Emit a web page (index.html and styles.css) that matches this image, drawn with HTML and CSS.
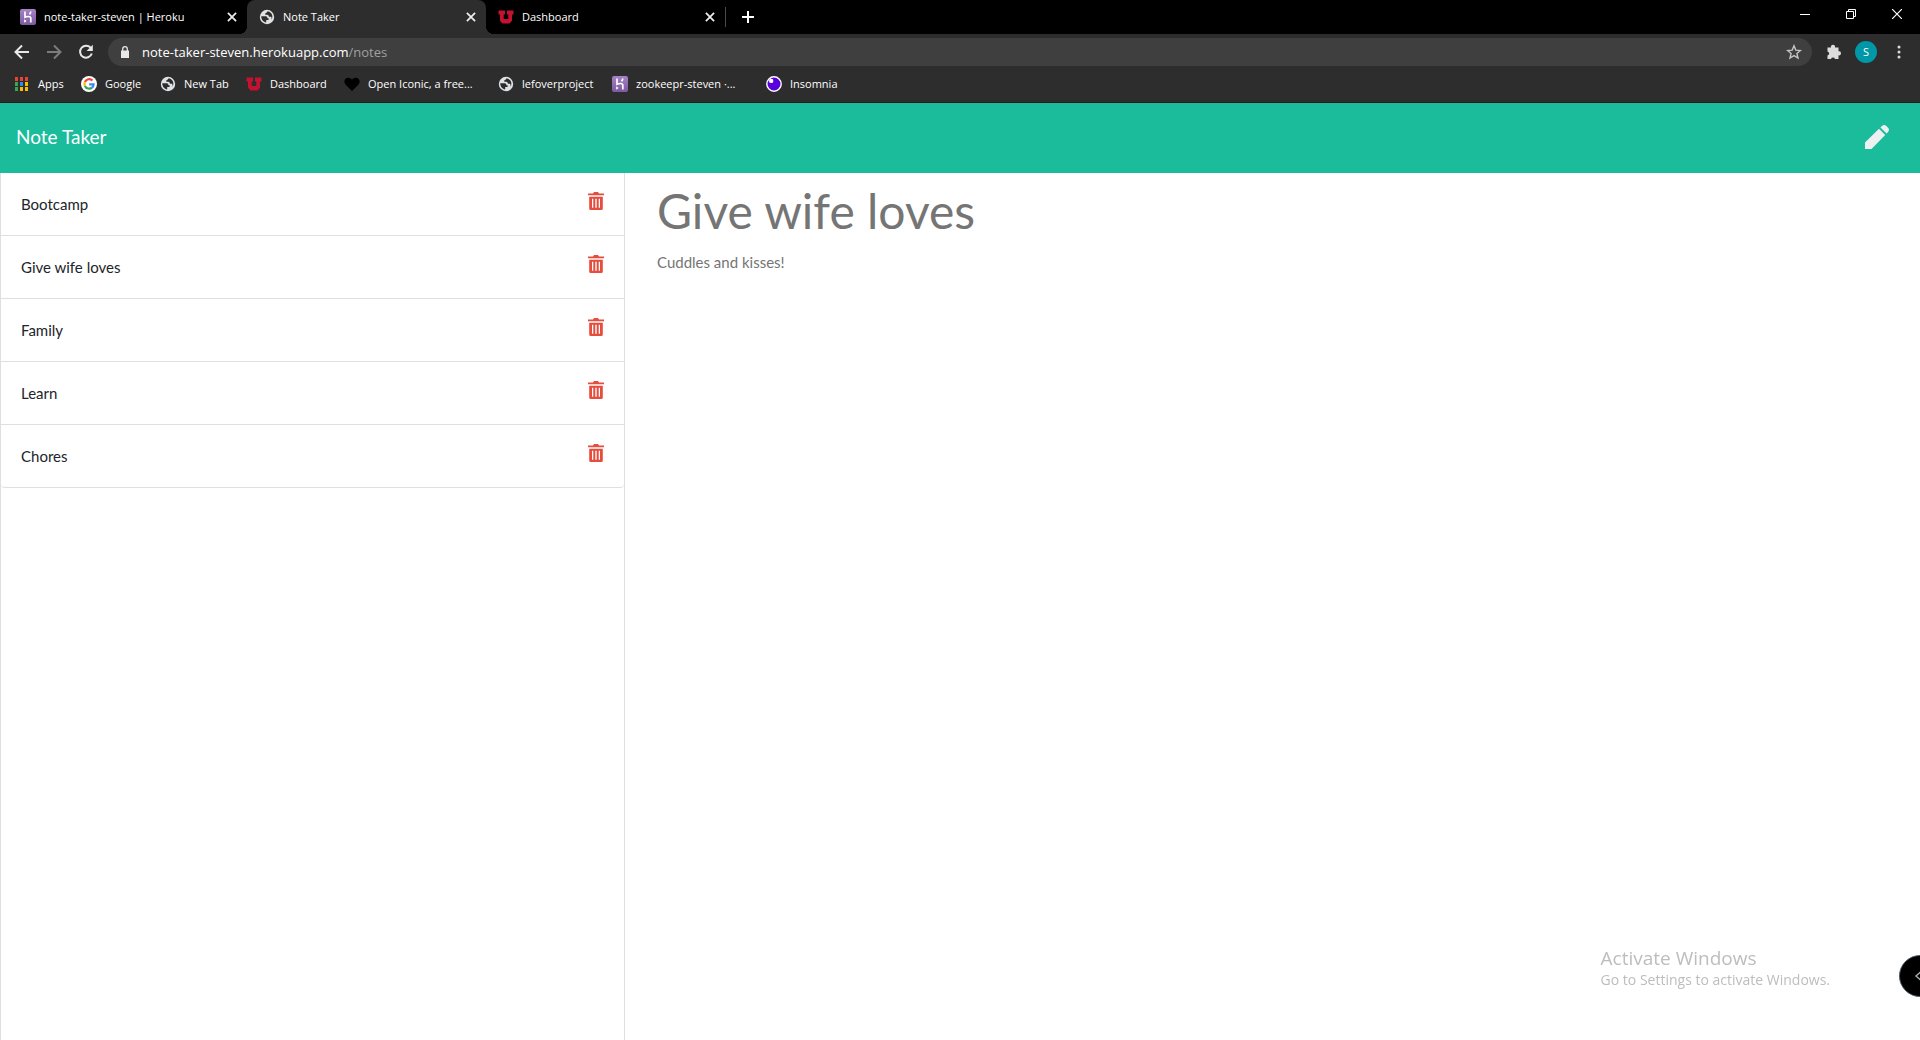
FILE: index.html
```html
<!DOCTYPE html>
<html lang="en">
<head>
<meta charset="utf-8">
<title>Note Taker</title>
<link rel="stylesheet" href="styles.css">
</head>
<body>
<svg class="sprite" aria-hidden="true">
  <defs>
    <linearGradient id="heroku-fill" x1="0" y1="0" x2="0" y2="1"><stop offset="0" stop-color="#a583c4"/><stop offset="1" stop-color="#7e5aa0"/></linearGradient>
  </defs>
  <symbol id="heroku" viewBox="0 0 16 16">
    <rect width="16" height="16" rx="2" fill="url(#heroku-fill)"/>
    <path d="M5 2.5V8.2C7 7.4 10.8 6.8 10.8 9.2V13.5M10.8 2.5C10.7 3.8 10.2 4.6 9.5 5.4" fill="none" stroke="#fff" stroke-width="1.7"/>
    <path d="M4.2 10.2L6.6 12L4.2 13.8Z" fill="#fff"/>
  </symbol>
  <symbol id="globe" viewBox="0 0 16 16">
    <circle cx="8" cy="8" r="7.2" fill="#dfe1e3"/>
    <path d="M2.2 7.2H6.6C8 7.2 8.4 8 8.4 9.3H9.6V11H7.2V13.4C4.5 13.1 2.3 10.6 2.2 7.2ZM8.5 2.3C8.3 3.6 7.4 4 6.3 4.2V5.8H8.3C9.3 5.8 9.7 6.5 9.9 7.7H12.2C12.6 8.9 12.7 9.9 12.3 11C14.3 8.2 13.8 3.5 8.5 2.3Z" fill="#2d2d2d"/>
  </symbol>
  <symbol id="utah" viewBox="0 0 16 16">
    <path d="M.5 1.5H7V5.5H5.7V10H10.3V5.5H9V1.5H15.5V5.5H14V11.8L11.5 14.5H4.5L2 11.8V5.5H.5Z" fill="#c41230"/>
  </symbol>
  <symbol id="close" viewBox="0 0 12 12"><path d="M2.500 2.500L9.500 9.500M9.500 2.500L2.500 9.500" stroke="#eee" stroke-width="1.500"/></symbol>
  <symbol id="trash" viewBox="0 0 16 18">
    <path fill="#e74c3c" fill-rule="evenodd" d="M0 1.500H5L6 0H10L11 1.500H16V3.200H0ZM1.200 4.800H14.800V16.500Q14.800 18 13.300 18H2.700Q1.200 18 1.200 16.500ZM4 6.800V15.800H5.300V6.800ZM7.300 6.800V15.800H8.700V6.800ZM10.700 6.800V15.800H12V6.800Z"/>
  </symbol>
</svg>

<header class="browser">
  <div class="tab-strip">
    <div class="tab">
      <svg class="favicon"><use href="#heroku"/></svg><span class="tab-title">note-taker-steven | Heroku</span>
      <button class="tab-close" aria-label="Close tab"><svg><use href="#close"/></svg></button>
    </div>
    <div class="tab tab-active">
      <svg class="favicon"><use href="#globe"/></svg><span class="tab-title">Note Taker</span>
      <button class="tab-close" aria-label="Close tab"><svg><use href="#close"/></svg></button>
    </div>
    <div class="tab">
      <svg class="favicon"><use href="#utah"/></svg><span class="tab-title">Dashboard</span>
      <button class="tab-close" aria-label="Close tab"><svg><use href="#close"/></svg></button>
    </div>
    <button class="new-tab" aria-label="New tab"><svg viewBox="0 0 12 12"><path d="M6 0V12M0 6H12" stroke="#fff" stroke-width="2"/></svg></button>
    <div class="window-controls">
      <button aria-label="Minimize"><svg viewBox="0 0 10 10"><path d="M0 5.500H10" stroke="#fff"/></svg></button>
      <button aria-label="Restore"><svg viewBox="0 0 10 10"><path d="M.5 2.500H7.500V9.500H.5ZM2.500 2.500V.5H9.500V7.500H7.500" fill="none" stroke="#fff"/></svg></button>
      <button aria-label="Close"><svg viewBox="0 0 10 10"><path d="M0 0L10 10M10 0L0 10" stroke="#fff" stroke-width="1.200"/></svg></button>
    </div>
  </div>

  <div class="toolbar">
    <button class="nav" aria-label="Back"><svg viewBox="0 0 16 16"><path d="M15 8H2M8 1.500L1.500 8L8 14.500" fill="none" stroke="#e8e8e8" stroke-width="2"/></svg></button>
    <button class="nav" aria-label="Forward"><svg viewBox="0 0 16 16"><path d="M1 8H14M8 1.500L14.500 8L8 14.500" fill="none" stroke="#7c7c7c" stroke-width="2"/></svg></button>
    <button class="nav" aria-label="Reload"><svg viewBox="0 0 16 16"><path d="M13 4.200A6 6 0 1 0 13.800 9.500" fill="none" stroke="#e8e8e8" stroke-width="2"/><path d="M14.800 .8V7H8.600Z" fill="#e8e8e8"/></svg></button>
    <div class="address">
      <svg class="lock" viewBox="0 0 10 12"><path d="M1 4.500H9V12H1Z" fill="#e8e8e8"/><path d="M2.700 5V3A2.300 2.300 0 0 1 7.300 3V5" fill="none" stroke="#e8e8e8" stroke-width="1.300"/></svg>
      <a class="url" href="#">note-taker-steven.herokuapp.com<span class="url-path">/notes</span></a>
      <button class="star" aria-label="Bookmark this tab"><svg viewBox="0 0 16 16"><path d="M8 1.800L9.800 6.100L14.400 6.500L10.900 9.500L12 14L8 11.600L4 14L5.100 9.500L1.600 6.500L6.200 6.100Z" fill="none" stroke="#c4c4c4" stroke-width="1.400"/></svg></button>
    </div>
    <button class="extensions" aria-label="Extensions"><svg viewBox="0 0 16 16"><path d="M1.500 3.500H5A2.100 2.100 0 1 1 9 3.500H12.500V7.300A2.050 2.050 0 1 1 12.500 11.300V15H9A2.100 2.100 0 0 0 5 15H1.500V11.500A2.100 2.100 0 0 0 1.500 7.400Z" fill="#dcdcdc"/></svg></button>
    <button class="avatar" aria-label="Profile">S</button>
    <button class="menu" aria-label="Menu"><svg viewBox="0 0 4 14"><path d="M2 2h0M2 7h0M2 12h0" stroke="#dcdcdc" stroke-width="3" stroke-linecap="round"/></svg></button>
  </div>

  <nav class="bookmarks">
    <a href="#"><svg viewBox="0 0 16 16"><path d="M1 1H4V5H1ZM6 1H9V5H6ZM11 1H14V5H11Z" fill="#ea4335"/><path d="M1 6H4V10H1Z" fill="#34a853"/><path d="M6 6H9V10H6Z" fill="#2a8af0"/><path d="M11 6H14V10H11Z" fill="#fbbc05"/><path d="M1 11H4V15H1Z" fill="#34a853"/><path d="M6 11H9V15H6ZM11 11H14V15H11Z" fill="#fbbc05"/></svg>Apps</a>
    <a href="#"><svg viewBox="0 0 16 16"><circle cx="8" cy="8" r="8" fill="#fff"/><g fill="none" stroke-width="2.200"><path d="M11.500 4.600A4.600 4.600 0 0 0 3.900 6" stroke="#ea4335"/><path d="M3.900 6A4.600 4.600 0 0 0 3.900 10" stroke="#fbbc05"/><path d="M3.900 10A4.600 4.600 0 0 0 11 11.600" stroke="#34a853"/><path d="M11 11.600A4.600 4.600 0 0 0 12.600 8.300H8.200" stroke="#4285f4"/></g></svg>Google</a>
    <a href="#"><svg><use href="#globe"/></svg>New Tab</a>
    <a href="#"><svg><use href="#utah"/></svg>Dashboard</a>
    <a href="#"><svg viewBox="0 0 16 16"><path d="M8 15L1.500 8.500C-2 4 3.500-1 8 3.500C12.500-1 18 4 14.500 8.500Z" fill="#000"/></svg>Open Iconic, a free...</a>
    <a href="#"><svg><use href="#globe"/></svg>lefoverproject</a>
    <a href="#"><svg><use href="#heroku"/></svg>zookeepr-steven ·...</a>
    <a href="#"><svg viewBox="0 0 16 16"><circle cx="8" cy="8" r="7.200" fill="#5a00dd" stroke="#fff" stroke-width="1.400"/><circle cx="5.200" cy="4.900" r="2.200" fill="#fff"/></svg>Insomnia</a>
  </nav>
</header>

<div class="navbar">
  <a class="brand" href="#">Note Taker</a>
  <button class="new-note" aria-label="New note"><svg viewBox="0 0 24 24"><path d="M0 24V17.500L14 3.800L20.200 10L6.500 24ZM15.400 2.400L17 1Q19.200-1 21.300 1L23 2.700Q25 4.800 23 7L21.600 8.600Z" fill="#ecf0f1"/></svg></button>
</div>

<main class="notes">
  <aside class="sidebar">
    <ul class="note-list">
      <li><span>Bootcamp</span><button aria-label="Delete Bootcamp"><svg><use href="#trash"/></svg></button></li>
      <li><span>Give wife loves</span><button aria-label="Delete Give wife loves"><svg><use href="#trash"/></svg></button></li>
      <li><span>Family</span><button aria-label="Delete Family"><svg><use href="#trash"/></svg></button></li>
      <li><span>Learn</span><button aria-label="Delete Learn"><svg><use href="#trash"/></svg></button></li>
      <li><span>Chores</span><button aria-label="Delete Chores"><svg><use href="#trash"/></svg></button></li>
    </ul>
  </aside>
  <section class="editor">
    <input class="note-title" aria-label="Note title" value="Give wife loves" readonly>
    <textarea class="note-text" aria-label="Note text" readonly>Cuddles and kisses!</textarea>
  </section>
</main>

<div class="activation">
  <p class="activation-title">Activate Windows</p>
  <p class="activation-text">Go to Settings to activate Windows.</p>
</div>
<button class="side-handle" aria-label="Open side panel"><svg viewBox="0 0 12 16"><path d="M10 1L2 8L10 15" fill="none" stroke="#aaa" stroke-width="1.500"/></svg></button>
</body>
</html>
```
FILE: styles.css
```css
* { box-sizing: border-box; }

body {
  margin: 0;
  min-height: 100vh;
  display: flex;
  flex-direction: column;
  overflow-x: hidden;
  background: #fff;
  color: #212529;
  font-family: Lato, "Liberation Sans", sans-serif;
  font-size: 15px;
  line-height: 22px;
}

button {
  display: flex;
  align-items: center;
  justify-content: center;
  padding: 0;
  border: 0;
  background: none;
  color: inherit;
  font: inherit;
}

a { color: inherit; text-decoration: none; }
svg { display: block; flex: none; }
.sprite { position: absolute; width: 0; height: 0; }

/* Browser chrome */
.browser {
  background: #2d2d2d;
  border-bottom: 1px solid #1e1e1e;
  color: #fff;
  font-family: "Open Sans", "Noto Sans", sans-serif;
  font-size: 11px;
  line-height: 16px;
}

.tab-strip { display: flex; height: 34px; padding-left: 8px; background: #000; }

.tab {
  display: flex;
  align-items: center;
  gap: 8px;
  width: 239px;
  padding: 0 8px 0 12px;
}
.tab-active { position: relative; background: #2d2d2d; border-radius: 8px 8px 0 0; }
.tab-active::before,
.tab-active::after {
  content: "";
  position: absolute;
  bottom: 0;
  width: 8px;
  height: 8px;
}
.tab-active::before {
  right: 100%;
  background: radial-gradient(circle at 0 0, transparent 8px, #2d2d2d 8px);
}
.tab-active::after {
  left: 100%;
  background: radial-gradient(circle at 100% 0, transparent 8px, #2d2d2d 8px);
}
.favicon { width: 16px; height: 16px; }
.tab-title { flex: 1; white-space: nowrap; }
.tab-close, .tab-close svg { width: 14px; height: 14px; }
.new-tab { width: 45px; height: 20px; margin-top: 7px; border-left: 1px solid #4a4a4a; }
.new-tab svg { width: 12px; height: 12px; }

.window-controls { display: flex; margin-left: auto; }
.window-controls button { width: 46px; height: 28px; }
.window-controls svg { width: 10px; height: 10px; }

.toolbar { display: flex; align-items: center; height: 36px; padding-left: 6px; }
.nav { width: 32px; height: 32px; }
.nav svg { width: 16px; height: 16px; }
.address {
  flex: 1;
  display: flex;
  align-items: center;
  gap: 12px;
  height: 28px;
  margin-left: 6px;
  padding: 0 10px 0 12px;
  border-radius: 14px;
  background: #3f3f3f;
}
.lock { width: 10px; height: 12px; }
.url { flex: 1; font-size: 13px; }
.url-path { color: #a0a0a0; }
.star svg, .extensions svg { width: 16px; height: 16px; }
.extensions { width: 43px; }
.avatar { width: 22px; height: 22px; border-radius: 50%; background: #0097a7; }
.menu { width: 43px; }
.menu svg { width: 4px; height: 14px; }

.bookmarks {
  display: grid;
  grid-template-columns: 67px 79px 86px 98px 154px 114px 154px auto;
  align-items: center;
  height: 32px;
  padding: 0 14px 4px;
  white-space: nowrap;
}
.bookmarks a { display: flex; align-items: center; gap: 8px; }
.bookmarks svg { width: 16px; height: 16px; }

/* Application bar */
.navbar {
  display: flex;
  align-items: center;
  justify-content: space-between;
  height: 70px;
  padding: 0 31px 2px 16px;
  background: #1abc9c;
  color: #fff;
}
.brand { font-size: 19px; line-height: 30px; }
.new-note svg { width: 24px; height: 24px; }

/* Notes */
.notes { flex: 1; display: grid; grid-template-columns: 1fr 2fr; }

.sidebar {
  margin-right: 15px;
  border: 1px solid #dfdfdf;
  border-width: 0 1px;
}
.note-list { margin: 0; padding: 0; list-style: none; }
.note-list li {
  display: flex;
  justify-content: space-between;
  padding: 19px 20px;
  border-bottom: 1px solid #dfdfdf;
  line-height: 24px;
}
.note-list li:last-child { border-radius: 0 0 4px 4px; }
.note-list button { height: 18px; }
.note-list svg { width: 16px; height: 18px; }

.editor { display: flex; flex-direction: column; padding: 8px 15px 0 17px; }
.note-title, .note-text {
  width: 100%;
  padding: 0;
  border: 0;
  outline: 0;
  resize: none;
  background: none;
  color: #757575;
  font: inherit;
}
.note-title { height: 60px; font-size: 48px; line-height: 60px; }
.note-text { flex: 1; margin-top: 10px; }

/* Desktop overlays */
.activation {
  position: fixed;
  right: 90px;
  bottom: 50px;
  color: #bdbdbd;
  font-family: "Open Sans", "Noto Sans", sans-serif;
}
.activation p { margin: 0; white-space: nowrap; }
.activation-title { font-size: 19px; line-height: 24px; }
.activation-text { font-size: 14px; line-height: 20px; }

.side-handle {
  position: fixed;
  right: -21px;
  bottom: 43px;
  width: 42px;
  height: 42px;
  border: 1px solid #42606b;
  border-radius: 50%;
  background: #000;
}
.side-handle svg { width: 12px; height: 16px; }
```
